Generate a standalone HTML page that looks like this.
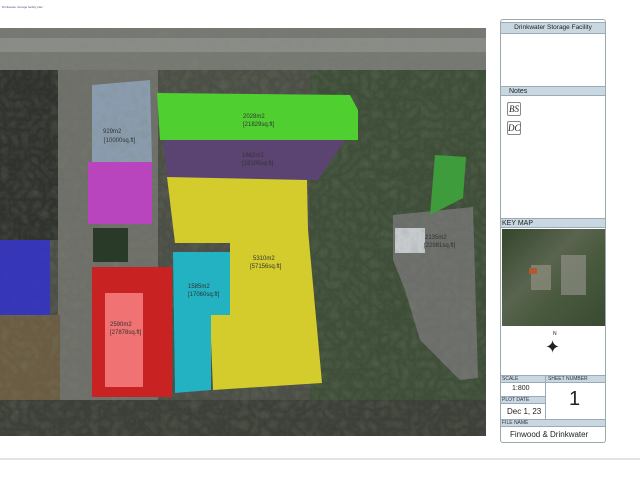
<!DOCTYPE html>
<html><head><meta charset="utf-8"><style>
*{margin:0;padding:0;box-sizing:border-box}
body{width:640px;height:480px;background:#fff;position:relative;overflow:hidden;font-family:"Liberation Sans",sans-serif;color:#222}
.abs{position:absolute}
.panel{left:500px;top:19px;width:106px;height:424px;border:1px solid #9aa;border-radius:3px;background:#fff}
.hdr{position:absolute;left:0;width:104px;background:#c9d8e0;border-top:1px solid #9ab;border-bottom:1px solid #9ab;font-size:7px;line-height:9px}
.sm{font-size:5px;line-height:7px;color:#334}
</style></head><body>
<div class="abs" style="left:2px;top:5px;font-size:3px;color:#557">Drinkwater storage facility plan</div>
<svg class="abs" style="left:0;top:28px" width="486" height="408" viewBox="0 28 486 408">
<defs><filter id="n"><feTurbulence baseFrequency="0.1" numOctaves="2" seed="3"/><feColorMatrix values="0 0 0 0 0.2 0 0 0 0 0.25 0 0 0 0 0.18 0 0 0 0.35 0"/></filter></defs>
<rect x="0" y="28" width="486" height="408" fill="#4a4d44"/>
<rect x="310" y="70" width="176" height="366" fill="#3d4c36"/>
<rect x="0" y="28" width="486" height="42" fill="#767772"/>
<rect x="0" y="38" width="486" height="14" fill="#8a8c88"/>
<rect x="0" y="70" width="58" height="170" fill="#2e302c"/>
<rect x="58" y="70" width="100" height="330" fill="#6e6e68"/>
<path d="M92 85 L150 80 L152 162 L92 162 Z" fill="#8a9cb0"/>
<rect x="0" y="315" width="60" height="85" fill="#6a5a40"/>
<rect x="0" y="400" width="486" height="36" fill="#3b3d36"/>
<path d="M393 215 L473 207 L478 378 L460 380 L420 340 L405 290 L393 260 Z" fill="#6c6d6a"/>
<rect x="395" y="228" width="30" height="25" fill="#c8ccd0"/>
<rect x="0" y="28" width="486" height="408" filter="url(#n)"/>
<rect x="0" y="240" width="50" height="75" fill="#3434c4" opacity=".9"/>
<rect x="88" y="162" width="64" height="62" fill="#c040c8" opacity=".9"/>
<rect x="93" y="228" width="35" height="34" fill="#2a3a28"/>
<rect x="92" y="267" width="80" height="130" fill="#c82222"/>
<rect x="105" y="293" width="38" height="94" fill="#f07272"/>
<path d="M157 93 L350 95 L358 110 L358 140 L160 140 Z" fill="#50d030"/>
<path d="M163 140 L345 140 L318 180 L168 180 Z" fill="#5c4472"/>
<path d="M167 177 L307 180 L308 230 L322 383 L213 390 L210 315 L230 315 L230 243 L175 243 Z" fill="#d4cc2c"/>
<path d="M173 252 L230 252 L230 315 L211 315 L211 390 L175 393 Z" fill="#22b2c2"/>
<path d="M435 155 L466 157 L463 198 L430 215 Z" fill="#3e9c3c"/>
<g font-size="6" fill="#333" font-family="Liberation Sans">
<text x="12" y="113">2141m2</text><text x="10" y="122">[23040sq.ft]</text>
<text x="103" y="133">929m2</text><text x="104" y="142">[10000sq.ft]</text>
<text x="243" y="118">2028m2</text><text x="243" y="126">[21829sq.ft]</text>
<text x="242" y="157">1682m2</text><text x="242" y="165">[18105sq.ft]</text>
<text x="253" y="260">5310m2</text><text x="250" y="268">[57156sq.ft]</text>
<text x="188" y="288">1585m2</text><text x="188" y="296">[17060sq.ft]</text>
<text x="110" y="326">2590m2</text><text x="110" y="334">[27878sq.ft]</text>
<text x="425" y="239">2135m2</text><text x="424" y="247">[22981sq.ft]</text>
</g>
</svg>
<div class="abs" style="left:0;top:458px;width:640px;height:2px;background:#e4e4e4"></div>
<div class="abs panel">
 <div class="hdr" style="top:2px;height:12px;text-align:center;font-size:6.5px;line-height:10px">Drinkwater Storage Facility</div>
 <div class="hdr" style="top:66px;height:10px;padding-left:8px">Notes</div>
 <div class="abs" style="left:6px;top:82px;width:14px;height:14px;border:1px solid #888;border-radius:2px;font:italic 9px 'Liberation Serif',serif;text-align:center;line-height:13px">BS</div>
 <div class="abs" style="left:6px;top:101px;width:14px;height:14px;border:1px solid #888;border-radius:2px;font:italic 9px 'Liberation Serif',serif;text-align:center;line-height:13px">DC</div>
 <div class="hdr" style="top:198px;height:10px;padding-left:1px">KEY MAP</div>
 <div class="abs" style="left:1px;top:209px;width:103px;height:97px;background:linear-gradient(135deg,#34462c,#5a6450 40%,#4a5a3e 60%,#3a4a32)"></div>
 <div class="abs" style="left:30px;top:245px;width:20px;height:25px;background:#8a8a7a;opacity:.8"></div>
 <div class="abs" style="left:60px;top:235px;width:25px;height:40px;background:#8d8e84;opacity:.7"></div>
 <div class="abs" style="left:28px;top:248px;width:8px;height:6px;background:#b05a30"></div>
 <div class="abs" style="left:52px;top:311px;font-size:5px">N</div>
 <div class="abs" style="left:44px;top:318px;font-size:18px;line-height:18px">✦</div>
 <div class="hdr" style="top:355px;height:8px;width:104px" ></div>
 <div class="abs sm" style="left:1px;top:356px">SCALE</div>
 <div class="abs sm" style="left:47px;top:356px">SHEET NUMBER</div>
 <div class="abs" style="left:44px;top:355px;width:1px;height:45px;background:#9ab"></div>
 <div class="abs" style="left:11px;top:365px;font-size:7px">1:800</div>
 <div class="hdr" style="top:376px;height:8px;width:44px"></div>
 <div class="abs sm" style="left:1px;top:377px">PLOT DATE</div>
 <div class="abs" style="left:6px;top:387px;font-size:8px">Dec 1, 23</div>
 <div class="abs" style="left:68px;top:368px;font-size:20px">1</div>
 <div class="hdr" style="top:399px;height:8px"></div>
 <div class="abs sm" style="left:1px;top:400px">FILE NAME</div>
 <div class="abs" style="left:9px;top:410px;font-size:8px">Finwood &amp; Drinkwater</div>
</div>
</body></html>
